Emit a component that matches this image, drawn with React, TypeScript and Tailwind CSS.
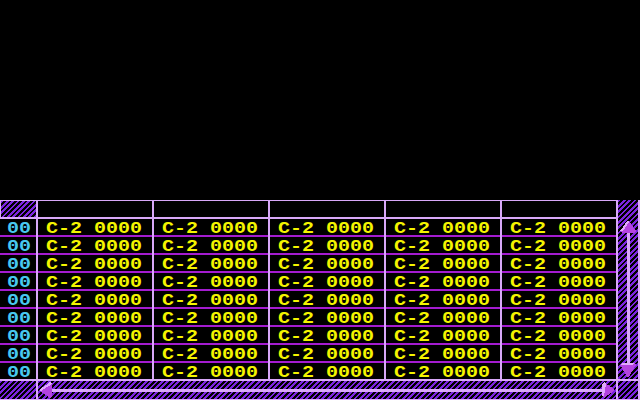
const HATCH =
  "bg-[repeating-linear-gradient(135deg,#7c24e0_0px,#7c24e0_1.9px,#000_1.9px,#000_3.8px)]";

const ROWS = 9;
const COLS = 5;

function Cell({ last, children }: { last: boolean; children: React.ReactNode }) {
  return (
    <div
      className={
        "h-[18px] flex items-center border-b-2 " +
        (last ? "border-[#d8a8f8]" : "border-[#a41cd0]")
      }
    >
      {children}
    </div>
  );
}

function Txt({ color, children }: { color: string; children: React.ReactNode }) {
  return (
    <span
      className={
        "inline-block origin-left scale-x-[1.25] font-['Liberation_Mono',monospace] font-bold text-[16px] leading-none whitespace-pre " +
        color
      }
    >
      {children}
    </span>
  );
}

function UpArrow() {
  return (
    <svg width="16" height="13" viewBox="0 0 16 13" shapeRendering="crispEdges">
      <polygon points="8,0 16,11 14,13 2,13 0,11" fill="#b444e0" />
      <polygon points="8,0 9,2 3,11 0,11" fill="#e0a8fc" />
    </svg>
  );
}

function DownArrow() {
  return (
    <svg width="16" height="15" viewBox="0 0 16 15" shapeRendering="crispEdges">
      <polygon points="0,2 2,0 14,0 16,2 8,15" fill="#b444e0" />
      <polygon points="0,2 2,0 14,0 13,2" fill="#e0a8fc" />
    </svg>
  );
}

function LeftArrow() {
  return (
    <svg width="13" height="16" viewBox="0 0 13 16" shapeRendering="crispEdges">
      <polygon points="0,8 11,0 13,2 13,14 11,16" fill="#b444e0" />
      <polygon points="0,8 11,0 13,2 2,9" fill="#e0a8fc" />
    </svg>
  );
}

function RightArrow() {
  return (
    <svg width="13" height="16" viewBox="0 0 13 16" shapeRendering="crispEdges">
      <polygon points="2,0 13,8 2,16 0,14 0,2" fill="#b444e0" />
      <polygon points="2,0 4,2 2,14 0,14 0,2" fill="#e0a8fc" />
    </svg>
  );
}

export default function App() {
  const rows = Array.from({ length: ROWS }, (_, i) => i);
  const cols = Array.from({ length: COLS }, (_, i) => i);

  return (
    <div className="w-[640px] h-[400px] bg-black flex flex-col overflow-hidden">
      <div className="h-[200px] shrink-0" />

      <div className="flex h-[200px]">
        {/* pattern grid + horizontal scrollbar */}
        <div className="w-[618px] flex flex-col">
          <div className="flex border-t border-[#d8a8f8]">
            {/* row number column */}
            <div className="w-[38px] flex flex-col border-r-2 border-[#d8a8f8]">
              <div className="h-[18px] border-b-2 border-[#d8a8f8] flex">
                <div className={"flex-1 border-l border-[#d8a8f8] " + HATCH} />
              </div>
              {rows.map((r) => (
                <Cell key={r} last={r === ROWS - 1}>
                  <div className="pl-[7px]">
                    <Txt color="text-[#48c8f0]">00</Txt>
                  </div>
                </Cell>
              ))}
            </div>

            {cols.map((c) => (
              <div key={c} className="w-[116px] flex flex-col border-r-2 border-[#d8a8f8]">
                <div className="h-[18px] border-b-2 border-[#d8a8f8]" />
                {rows.map((r) => (
                  <Cell key={r} last={r === ROWS - 1}>
                    <div className="pl-[8px]">
                      <Txt color="text-[#f4f400]">C-2 0000</Txt>
                    </div>
                  </Cell>
                ))}
              </div>
            ))}
          </div>

          <div className="h-[19px] flex border-b border-[#d8a8f8]">
            <div className={"w-[36px] " + HATCH} />
            <div className="w-[2px] bg-[#d8a8f8]" />
            <div className={"w-[578px] flex items-center pl-[1px] pr-[1px] " + HATCH}>
              <LeftArrow />
              <div className="flex-1 h-[3px] bg-[#d8a8f8]" />
              <RightArrow />
            </div>
            <div className="w-[2px] bg-[#d8a8f8]" />
          </div>
        </div>

        {/* vertical scrollbar */}
        <div className="w-[22px] flex flex-col border-r-2 border-[#d8a8f8]">
          <div className={"h-[179px] flex flex-col items-center pt-[20px] pb-[1px] " + HATCH}>
            <UpArrow />
            <div className="flex-1 w-[3px] bg-[#d8a8f8]" />
            <DownArrow />
          </div>
          <div className="h-[2px] bg-[#d8a8f8]" />
          <div className={"h-[19px] border-b border-[#d8a8f8] " + HATCH} />
        </div>
      </div>
    </div>
  );
}
